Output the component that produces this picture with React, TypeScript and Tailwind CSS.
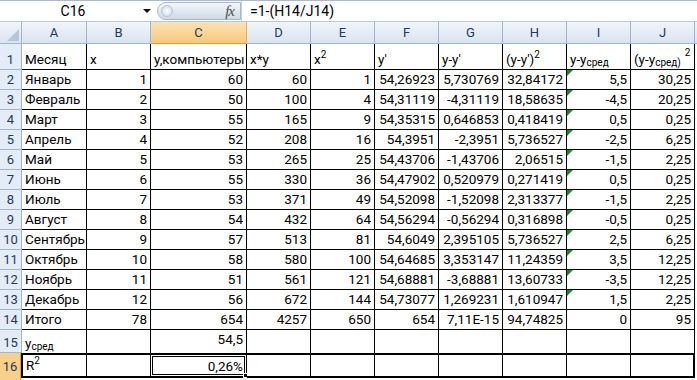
import React from 'react';

const colW = ['w-[65px]', 'w-[64px]', 'w-[96px]', 'w-[64px]', 'w-[64px]', 'w-[64px]', 'w-[64px]', 'w-[64px]', 'w-[64px]', 'w-[64px]'];
const letters = ['A', 'B', 'C', 'D', 'E', 'F', 'G', 'H', 'I', 'J'];

const rows: string[][] = [
  ['Январь', '1', '60', '60', '1', '54,26923', '5,730769', '32,84172', '5,5', '30,25'],
  ['Февраль', '2', '50', '100', '4', '54,31119', '-4,31119', '18,58635', '-4,5', '20,25'],
  ['Март', '3', '55', '165', '9', '54,35315', '0,646853', '0,418419', '0,5', '0,25'],
  ['Апрель', '4', '52', '208', '16', '54,3951', '-2,3951', '5,736527', '-2,5', '6,25'],
  ['Май', '5', '53', '265', '25', '54,43706', '-1,43706', '2,06515', '-1,5', '2,25'],
  ['Июнь', '6', '55', '330', '36', '54,47902', '0,520979', '0,271419', '0,5', '0,25'],
  ['Июль', '7', '53', '371', '49', '54,52098', '-1,52098', '2,313377', '-1,5', '2,25'],
  ['Август', '8', '54', '432', '64', '54,56294', '-0,56294', '0,316898', '-0,5', '0,25'],
  ['Сентябрь', '9', '57', '513', '81', '54,6049', '2,395105', '5,736527', '2,5', '6,25'],
  ['Октябрь', '10', '58', '580', '100', '54,64685', '3,353147', '11,24359', '3,5', '12,25'],
  ['Ноябрь', '11', '51', '561', '121', '54,68881', '-3,68881', '13,60733', '-3,5', '12,25'],
  ['Декабрь', '12', '56', '672', '144', '54,73077', '1,269231', '1,610947', '1,5', '2,25'],
  ['Итого', '78', '654', '4257', '650', '654', '7,11E-15', '94,74825', '0', '95'],
];

function RowHead({ n }: { n: number }) {
  return (
    <div className="w-[22px] shrink-0 h-full flex items-end justify-center pb-[1px] text-[13px] text-[#1f3a5c] bg-[#e4ecf7] border-r border-b border-[#9eb6ce]">
      {n}
    </div>
  );
}

function Cell({ i, right, children, cls, flag }: { i: number; right?: boolean; children?: React.ReactNode; cls?: string; flag?: boolean }) {
  return (
    <div
      className={`${colW[i]} shrink-0 relative flex items-end overflow-hidden whitespace-nowrap px-[3px] pb-[1px] border-black ${
        right ? 'justify-end' : 'justify-start'
      } ${cls ?? 'h-full border-r border-b'}`}
    >
      {flag ? (
        <svg className="absolute left-0 top-0" width="6" height="6" viewBox="0 0 6 6">
          <polygon points="0,0 6,0 0,6" fill="#1d8a1d" />
        </svg>
      ) : null}
      <span>{children}</span>
    </div>
  );
}

const sup = 'text-[10px] -top-[6px]';
const sub = 'text-[10px] top-[2px]';

export default function App() {
  return (
    <div className="w-[697px] h-[380px] overflow-hidden bg-white text-black font-['Roboto',sans-serif] text-[13.5px] leading-[17px]">
      {/* formula bar */}
      <div className="h-[22px] flex items-stretch border-t border-[#a9bbd2] border-b border-b-[#b9c9dc] bg-white">
        <div className="w-[140px] flex items-center justify-center text-[14px] pl-[6px]">C16</div>
        <div className="w-[17px] flex items-center justify-start pl-[3px]">
          <svg width="8" height="4" viewBox="0 0 8 4">
            <polygon points="0,0 8,0 4,4" fill="#111" />
          </svg>
        </div>
        <div className="w-[84px] my-[1px] rounded-l-full border border-[#a7b6c9] bg-linear-to-b from-[#f4f7fb] to-[#cfd9e6] flex items-center justify-between pl-[3px] pr-[6px]">
          <div className="w-[12px] h-[12px] rounded-full bg-radial from-white to-[#c9d3df] border border-[#b9c5d3]" />
          <span className="font-['Liberation_Serif',serif] italic text-[15px] text-[#4d4d4d] tracking-[-1px]">fx</span>
        </div>
        <div className="flex-1 flex items-center pl-[8px] text-[14px] border-l border-[#c5d1df]">=1-(H14/J14)</div>
      </div>

      {/* column headers */}
      <div className="h-[22px] flex text-[13px] text-[#1f3a5c]">
        <div className="w-[22px] shrink-0 bg-linear-to-b from-[#f1f5fa] to-[#dae3ef] border-r border-b border-[#9eb6ce] flex items-end justify-end p-[2px]">
          <svg width="12" height="12" viewBox="0 0 12 12">
            <polygon points="12,0 12,12 0,12" fill="#b6c6da" />
          </svg>
        </div>
        {letters.map((l, i) => (
          <div
            key={l}
            className={`${colW[i]} shrink-0 flex items-center justify-center border-r border-b ${
              i === 2
                ? 'bg-linear-to-b from-[#fbe3b6] to-[#f6c978] border-r-[#e0b06a] border-b-[#f29536]'
                : 'bg-linear-to-b from-[#f1f5fa] to-[#dae3ef] border-[#9eb6ce]'
            }`}
          >
            {l}
          </div>
        ))}
        <div className="flex-1 bg-linear-to-b from-[#f1f5fa] to-[#dae3ef] border-b border-[#9eb6ce]" />
      </div>

      {/* row 1 */}
      <div className="h-[26px] flex">
        <RowHead n={1} />
        <Cell i={0}>Месяц</Cell>
        <Cell i={1}>x</Cell>
        <Cell i={2}>y,компьютеры</Cell>
        <Cell i={3}>x*y</Cell>
        <Cell i={4}>
          x<sup className={sup}>2</sup>
        </Cell>
        <Cell i={5}>y'</Cell>
        <Cell i={6}>y-y'</Cell>
        <Cell i={7}>
          (y-y')<sup className={sup}>2</sup>
        </Cell>
        <Cell i={8}>
          y-y<sub className={sub}>сред</sub>
        </Cell>
        <Cell i={9}>
          (y-y<sub className={sub}>сред)</sub>
          <sup className="text-[10px] -top-[8px] ml-[4px]">2</sup>
        </Cell>
        <div className="flex-1" />
      </div>

      {/* rows 2-14 */}
      {rows.map((r, ri) => (
        <div key={ri} className="h-[20px] flex">
          <RowHead n={ri + 2} />
          {r.map((v, ci) => (
            <Cell key={ci} i={ci} right={ci > 0} flag={ci === 8 && ri < 12}>
              {v}
            </Cell>
          ))}
          <div className="flex-1" />
        </div>
      ))}

      {/* row 15 */}
      <div className="h-[23px] flex">
        <RowHead n={15} />
        <Cell i={0} cls="h-full border-r">
          y<sub className={sub}>сред</sub>
        </Cell>
        <Cell i={1} cls="h-full border-r" />
        <Cell i={2} right cls="h-full border-r pb-[5px]">
          54,5
        </Cell>
        {[3, 4, 5, 6, 7, 8, 9].map((i) => (
          <Cell key={i} i={i} cls="h-full border-r" />
        ))}
        <div className="flex-1" />
      </div>

      {/* row 16 */}
      <div className="h-[27px] flex items-start">
        <div className="h-full w-[21px] shrink-0 bg-[#f7d08a] border-r border-[#f29536] flex items-start justify-center pt-[5px] text-[13px] text-[#1f3a5c]">
          16
        </div>
        <div className="w-[66px] h-[25px] shrink-0 flex items-end px-[3px] pb-[2px] border-l-2 border-t-2 border-b-2 border-r border-black">
          <span>
            R<sup className={sup}>2</sup>
          </span>
        </div>
        <Cell i={1} cls="h-[25px] border-t-2 border-b-2 border-r" />
        <Cell i={2} right cls="h-[25px] border-t-2 border-b-2 border-r overflow-visible">
          0,26%
          <span className="absolute inset-[1px] border border-black pointer-events-none" />
          <span className="absolute right-[-2px] bottom-[-2px] w-[5px] h-[5px] bg-black border border-white" />
        </Cell>
        {[3, 4, 5, 6, 7, 8].map((i) => (
          <Cell key={i} i={i} cls="h-[25px] border-t-2 border-b-2 border-r" />
        ))}
        <Cell i={9} cls="h-[25px] border-t-2 border-b-2 border-r-2" />
        <div className="flex-1" />
      </div>
    </div>
  );
}
